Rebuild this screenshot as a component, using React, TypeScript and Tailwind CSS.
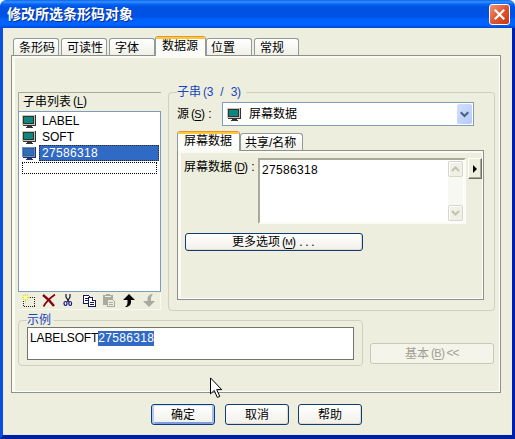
import React from 'react';

const alignment: Record<string, string> = {
  '(': 'justify-end',
  ')': 'justify-start',
  ':': 'justify-center',
};

/** Latin text set on the 6px half-width grid of the dialog font. */
function Half({ text, accel }: { text: string; accel?: string }) {
  return (
    <>
      {text.split('').map((ch, i) => (
        <span
          key={i}
          className={`inline-flex h-[13px] w-[6px] shrink-0 whitespace-pre leading-[13px] ${alignment[ch] ?? 'justify-center'} ${
            ch === accel ? 'border-b border-current' : ''
          } ${ch === 'M' ? 'text-[9px]' : ch === accel ? 'text-[11px]' : ''}`}
        >
          {ch}
        </span>
      ))}
    </>
  );
}

function Monitor({ selected = false }: { selected?: boolean }) {
  return (
    <svg width="14" height="14" viewBox="0 0 14 14" shapeRendering="crispEdges" className="shrink-0">
      <path d="M0 1h13v10H0z" fill={selected ? '#6c8fcb' : '#c6c6b6'} />
      <path d="M13 1h1v11H1v-1h12z" fill={selected ? '#1c2f68' : '#333'} />
      <path d="M1 2h11v8H1z" fill={selected ? '#3a5c9c' : '#303030'} />
      <path d="M2 3h9v6H2z" fill={selected ? '#2f70b4' : '#0b8780'} />
      <path d="M5 12h5v1H5zM4 13h7v1H4z" fill={selected ? '#243a70' : '#333'} />
    </svg>
  );
}

function Tab({ label, active, className }: { label: string; active?: boolean; className: string }) {
  return active ? (
    <div className={`relative z-10 -mb-px flex h-5 shrink-0 flex-col overflow-hidden rounded-t-[3px] border-x border-[#919b9c] bg-[#fcfcf8] ${className}`}>
      <div className="h-[3px] shrink-0 border-t border-[#e5972d] bg-[#ffc73c]" />
      <div className="pl-[6px] leading-[15px]">{label}</div>
    </div>
  ) : (
    <div className={`h-[17px] shrink-0 rounded-t-[3px] border border-b-0 border-[#919b9c] bg-gradient-to-b from-white to-[#f0f0e8] pl-[5px] pt-[1px] leading-4 ${className}`}>
      {label}
    </div>
  );
}

function Button({ children, className = '', isDefault }: { children: React.ReactNode; className?: string; isDefault?: boolean }) {
  return (
    <button
      className={`flex shrink-0 items-center justify-center rounded-[3px] border border-[#123a73] bg-gradient-to-b from-white to-[#f1f0e9] leading-none ${
        isDefault ? 'shadow-[inset_0_1px_0_#cee7ff,inset_2px_0_0_#b2cbf5,inset_-2px_0_0_#a3bdf0,inset_0_-2px_0_#7d9ee0]' : 'shadow-[inset_-1px_-1px_0_#dedbd0]'
      } ${className}`}
    >
      {children}
    </button>
  );
}

function ScrollArrow({ up }: { up?: boolean }) {
  return (
    <div className="flex h-4 w-[15px] items-center justify-center rounded-[2px] border border-[#d6d7c9] bg-[#f0f0e6] shadow-[inset_1px_1px_0_white]">
      <svg width="9" height="6" viewBox="0 0 9 6" fill="none" stroke="#c2c2b5" strokeWidth="2">
        <path d={up ? 'M1 5l3.5-3.5L8 5' : 'M1 1l3.5 3.5L8 1'} />
      </svg>
    </div>
  );
}

function Toolbar() {
  return (
    <div className="flex h-[18px] w-[143px] items-center border-b border-r border-[#fafaf2] pl-[4px]">
      <svg width="13" height="14" viewBox="0 0 13 14" shapeRendering="crispEdges" fill="none">
        <path d="M1.500 3.500h11v9h-11z" stroke="#222" strokeDasharray="1 1" />
        <path d="M3.500 0v8M0 3.500h8M1 1l5 5M6 1l-5 5" stroke="#dede3c" />
        <path d="M2 2h3v3H2z" fill="#ffff90" />
      </svg>
      <svg className="ml-[7px]" width="14" height="13" viewBox="0 0 14 13" fill="none" stroke="#85000c">
        <path d="M1 1c4 3 8 7 11 11" strokeWidth="2.300" />
        <path d="M13 .5C8 4 4 8 1.500 12.500" strokeWidth="1.700" />
      </svg>
      <svg className="ml-[7px]" width="10" height="13" viewBox="0 0 10 13" fill="none">
        <path d="M3 0v3l3 5M7 0v3L4 8" stroke="#17172b" strokeWidth="1.200" />
        <ellipse cx="2.500" cy="9.500" rx="1.500" ry="2" stroke="#15158a" strokeWidth="1.200" />
        <ellipse cx="7.200" cy="9.500" rx="1.400" ry="2" stroke="#15158a" strokeWidth="1.200" />
      </svg>
      <svg className="ml-[10px]" width="13" height="12" viewBox="0 0 13 12" shapeRendering="crispEdges" fill="#fff" stroke="#17175e">
        <path d="M.5.500h5l2 2v6h-7z" />
        <path d="M2 3.500h3M2 5.500h3" />
        <path d="M5.500 2.500h4l3 3v6h-7z" />
        <path d="M9.500 2.500v3h3M7 7.500h4M7 9.500h4" />
      </svg>
      <svg className="ml-[6px]" width="14" height="13" viewBox="0 0 14 13" shapeRendering="crispEdges">
        <path d="M1 1h3V0h4v1h3v4H6v6H1z" fill="#aaaa9e" />
        <path d="M3 2h6v1H3z" fill="#eeeedc" />
        <path d="M5.500 5.500h5l2 2v5h-7z" fill="#eeeedc" stroke="#aaaa9e" />
        <path d="M7 8.500h4M7 10.500h4" stroke="#aaaa9e" />
      </svg>
      <svg className="ml-[7px]" width="12" height="13" viewBox="0 0 12 13" fill="#050505">
        <path d="M6 0l6 6H8v2c0 2-1 4-4 5H2c2-1 2.500-3 2.500-5V6H0z" />
      </svg>
      <svg className="ml-[8px]" width="12" height="13" viewBox="0 0 12 13" fill="#aaaaa0">
        <path d="M6 13l6-6H8V5c0-2 .5-3.500 2-5-3 0-5.500 2-5.500 5v2H0z" />
      </svg>
    </div>
  );
}

function SubstringList() {
  return (
    <div className="flex w-[143px] flex-col">
      <div className="flex h-[19px] items-center border-l border-t border-[#aaa999] pb-px pl-[4px]">
        子串列表<Half text="(L)" accel="L" />
      </div>
      <div className="h-[181px] border border-[#7f9db9] bg-white">
        {['LABEL', 'SOFT'].map((name) => (
          <div key={name} className="flex h-4 items-center gap-[6px] pl-[3px] pt-[2px]">
            <Monitor />
            <span className="leading-4">{name}</span>
          </div>
        ))}
        <div className="flex h-[17px] items-center gap-[3px] pl-[3px] pr-px pt-px">
          <Monitor selected />
          <span className="h-4 flex-1 border border-dotted border-[#332b18] bg-[#316ac5] pl-[2px] leading-[14px] tracking-[0.33px] text-white">27586318</span>
        </div>
        <div className="ml-[3px] mt-[1px] h-[12px] w-[135px] border border-dotted border-black" />
      </div>
      <Toolbar />
    </div>
  );
}

function SubstringGroup() {
  return (
    <div className="h-[219px] w-[327px] rounded-[4px] border border-[#d0d0bf] pl-2">
      <div className="-mt-[9px] flex h-4 w-[69px] items-center bg-[#edeedd] text-[#1746bd]">
        子串<Half text="(3 / 3)" />
      </div>
      <div className="mt-[2px] flex h-6 items-center">
        <div className="flex w-[45px] items-center">
          源<Half text="(S):" accel="S" />
        </div>
        <div className="flex h-6 w-[252px] items-center border border-[#7f9db9] bg-white pl-[4px] pr-px">
          <Monitor />
          <span className="ml-[8px] flex-1">屏幕数据</span>
          <div className="flex h-5 w-[15px] items-center justify-center rounded-[2px] bg-gradient-to-br from-[#d3dffc] to-[#b4cafa]">
            <svg width="9" height="7" viewBox="0 0 9 7" fill="none" stroke="#4d6185" strokeWidth="2.200">
              <path d="M.7 1.200l3.800 3.800L8.300 1.200" />
            </svg>
          </div>
        </div>
      </div>
      <div className="mt-[5px] flex h-[19px] items-end">
        <Tab label="屏幕数据" active className="w-[63px]" />
        <Tab label="共享/名称" className="w-[63px] !pl-[4px]" />
      </div>
      <div className="h-[150px] w-[307px] border border-[#8c918c] pl-[7px] pt-[7px] shadow-[inset_3px_2px_0_#fbfbf4,inset_-1px_-1px_0_#fff]">
        <div className="flex items-start">
          <div className="mt-[1px] flex h-4 w-[73px] items-center">
            <span className="-ml-px">屏幕数据</span><Half text="(D):" accel="D" />
          </div>
          <div className="flex h-[66px] w-[208px] justify-between border-2 border-b-[#fcfcf6] border-l-[#aaa99a] border-r-[#fcfcf6] border-t-[#aaa99a] bg-white py-px pl-[2px] pr-px">
            <span className="pt-px leading-4 tracking-[0.33px]">27586318</span>
            <div className="flex w-[15px] flex-col justify-between bg-[#f8f8f2]">
              <ScrollArrow up />
              <ScrollArrow />
            </div>
          </div>
          <div className="ml-[2px] flex h-[21px] w-[14px] items-center justify-center border border-b-[#6e6e64] border-l-white border-r-[#6e6e64] border-t-white shadow-[inset_-1px_-1px_0_#aaa999]">
            <svg width="4" height="8" viewBox="0 0 4 8"><path d="M0 0l4 4-4 4z" /></svg>
          </div>
        </div>
        <Button className="mt-[9px] h-[18px] w-[178px]">
          更多选项<Half text="(M)..." accel="M" />
        </Button>
      </div>
    </div>
  );
}

export default function App() {
  return (
    <div className="relative flex h-[439px] w-[515px] flex-col overflow-hidden bg-white font-['Liberation_Sans','Noto_Sans_CJK_SC',sans-serif] text-[12px] leading-4 text-black">
      <header className="flex h-7 shrink-0 items-center justify-between rounded-t-[6px] bg-[linear-gradient(to_bottom,#1263e8_0px,#3191ff_2px,#0866f5_4px,#0052e2_7px,#0052e5_17px,#0062ff_19px,#0062ff_25px,#0047d2_28px)] pl-[7px] pr-[5px]">
        <h1 className="text-[14px] font-bold leading-7 text-white [text-shadow:1px_1px_#0b2e8c]">修改所选条形码对象</h1>
        <button className="mt-px flex h-[21px] w-[21px] items-center justify-center rounded-[3px] border border-white bg-gradient-to-br from-[#ee9475] via-[#df5530] to-[#c9370e]">
          <svg width="11" height="11" viewBox="0 0 11 11" stroke="#fff" strokeWidth="2.200"><path d="M.8.800l9.400 9.400M10.200.800L.8 10.200" /></svg>
        </button>
      </header>
      <div className="flex flex-1 flex-col border-b-4 border-l-[3px] border-r-[3px] border-b-[#001f9e] border-l-[#0a50e0] border-r-[#001fb0] bg-[#edeedd] pt-2 shadow-[inset_0_-1px_0_#d9e9f5]">
        <nav className="ml-[10px] flex h-[19px] items-end">
          <Tab label="条形码" className="mr-[2px] w-[46px]" />
          <Tab label="可读性" className="mr-[2px] w-[46px]" />
          <Tab label="字体" className="w-[46px]" />
          <Tab label="数据源" active className="w-[51px]" />
          <Tab label="位置" className="mr-[2px] w-[46px] !pl-[4px]" />
          <Tab label="常规" className="w-[45px]" />
        </nav>
        <main className="ml-2 h-[338px] w-[490px] shrink-0 border border-[#8c918c] pl-[6px] pt-9 shadow-[inset_3px_2px_0_#fbfbf4,inset_-1px_-1px_0_#fff]">
          <div className="flex gap-[7px]">
            <SubstringList />
            <SubstringGroup />
          </div>
          <div className="mt-[9px] flex gap-[7px]">
            <div className="h-[46px] w-[345px] rounded-[4px] border border-[#d0d0bf] pl-2">
              <div className="-mt-2 flex h-[14px] w-[27px] items-center bg-[#edeedd] text-[#1746bd]">示例</div>
              <div className="h-[33px] w-[327px] border border-[#73746a] bg-white pl-[2px] pt-[2px] leading-4">
                <span className="tracking-[-0.12px]">LABELSOFT</span>
                <span className="inline-block h-[15px] bg-[#316ac5] leading-[15px] tracking-[0.33px] text-white">27586318</span>
              </div>
            </div>
            <div className="mt-[23px] flex h-[21px] w-[124px] items-center justify-center rounded-[3px] border border-[#c9c7ba] bg-[#f5f4ea] text-[#a1a192]">
              基本<Half text="(B)" accel="B" /><Half text="&lt;&lt;" />
            </div>
          </div>
        </main>
        <footer className="ml-[148px] mt-[11px] flex">
          <Button isDefault className="mr-[10px] h-[21px] w-16">确定</Button>
          <Button className="mr-[9px] h-[21px] w-16">取消</Button>
          <Button className="h-[21px] w-16">帮助</Button>
        </footer>
      </div>
      <svg className="absolute left-[210px] top-[377px]" width="13" height="22" viewBox="0 0 13 22" fill="#fff" stroke="#000">
        <path d="M.5.900v16l3.700-3.500 3.100 7 2.500-1-3.100-6.800h5z" />
      </svg>
    </div>
  );
}
